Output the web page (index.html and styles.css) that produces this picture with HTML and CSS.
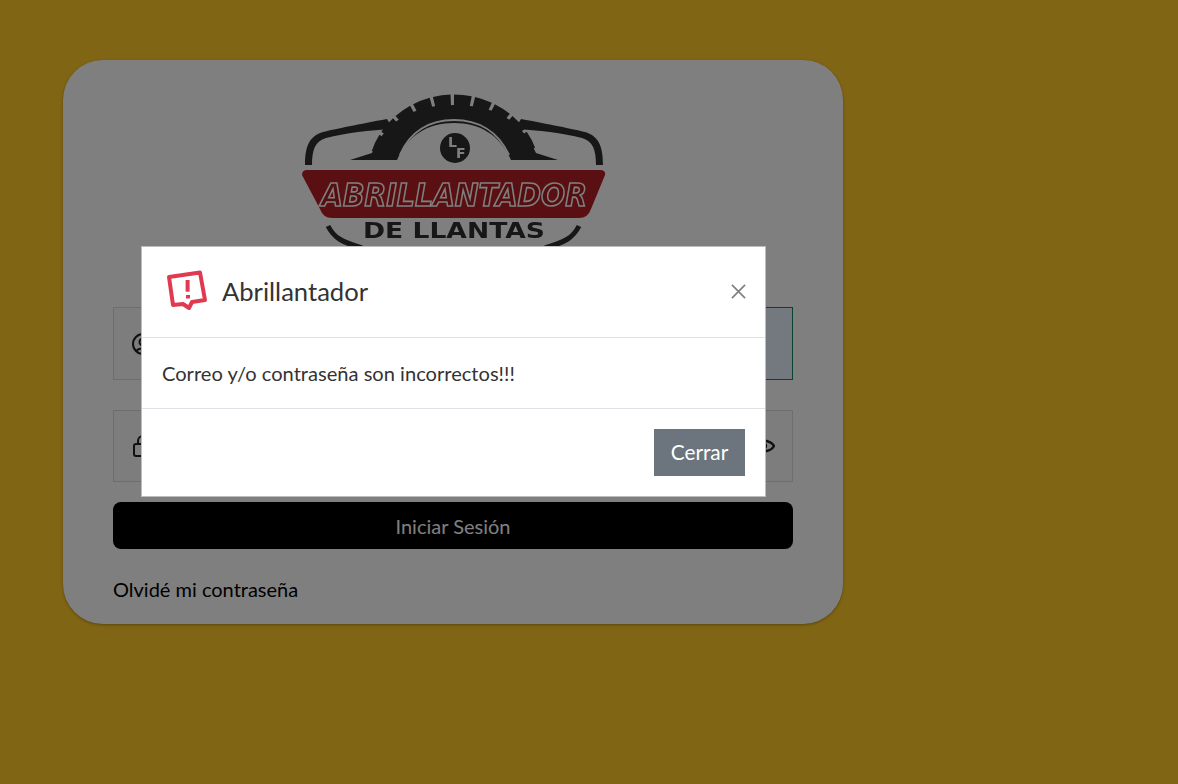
FILE: index.html
```html
<!DOCTYPE html>
<html lang="es">
<head>
<meta charset="utf-8">
<title>Abrillantador</title>
<link rel="stylesheet" href="styles.css">
</head>
<body>
<main class="card">
  <svg class="logo" viewBox="0 0 330 165" width="330" height="165">
    <path class="wing" d="M97 34 C70 39 45 44 33 47 C20 51 15 60 15 80 L22 80 C22 65 25 56 36 53 C55 48 80 45 103 44 Z"/>
    <path class="wing" d="M231 34 C258 39 283 44 295 47 C308 51 313 60 313 80 L306 80 C306 65 303 56 292 53 C273 48 248 45 225 44 Z"/>
    <path class="solid" d="M60 75 L82 68 C98 32 128 20 164 20 C200 20 230 32 246 68 L268 75 L221 75 C210 50 190 38 164 38 C138 38 118 50 107 75 Z"/>
    <path class="tread" d="M88 68 C96 42 125 16 164 16 C203 16 232 42 240 68" pathLength="100"/>
    <path class="hub-arc" d="M110 70 C120 46 140 35 164 35 C188 35 208 46 219 70"/>
    <circle class="solid" cx="165" cy="63" r="15"/>
    <text class="lf" x="158" y="62">L</text>
    <text class="lf" x="166" y="73">F</text>
    <path class="banner" d="M12 90 Q12 85 17 85 L310 85 Q316 85 315 90 L301 124 Q298 133 289 133 L42 133 Q33 133 30 124 Z"/>
    <text class="brand" transform="translate(31 121) scale(1 1.3)" textLength="266" lengthAdjust="spacingAndGlyphs">ABRILLANTADOR</text>
    <text class="sub" x="73" y="153" textLength="182" lengthAdjust="spacingAndGlyphs">DE LLANTAS</text>
    <path class="arc" d="M38 141 C44 153 52 157 72 163"/>
    <path class="arc" d="M289 141 C283 153 275 157 255 163"/>
  </svg>

  <div class="field field-email">
    <span class="addon">
      <svg class="ico" viewBox="0 0 24 24" width="24" height="24"><circle cx="12" cy="12" r="10"/><circle cx="12" cy="10" r="3.5"/><path d="M5.5 19 C7 15.5 17 15.5 18.5 19"/></svg>
    </span>
    <span class="value"></span>
  </div>

  <div class="field">
    <span class="addon">
      <svg class="ico" viewBox="0 0 24 24" width="24" height="24"><rect x="3" y="10" width="18" height="12" rx="2"/><path d="M7 10 V7 a5 5 0 0 1 10 0 V10"/></svg>
    </span>
    <span class="value"></span>
    <span class="addon-eye">
      <svg class="ico ico-eye" viewBox="0 0 24 24" width="24" height="24"><path d="M1 12 C5 5 19 5 23 12 C19 19 5 19 1 12 Z"/><circle cx="12" cy="12" r="3"/></svg>
    </span>
  </div>

  <button class="login">Iniciar Sesión</button>
  <a class="forgot">Olvidé mi contraseña</a>
</main>

<div class="backdrop">
  <section class="dialog">
    <header class="dialog-head">
      <svg class="alert" viewBox="0 0 44 44" width="44" height="44">
        <path d="M5 7 L36 2.5 L41 30 L28 32 L25 38 L19 34 L9 35 Z"/>
        <path d="M23.6 10 L23.6 21.7"/>
        <path d="M24 25 L24 28.5"/>
      </svg>
      <h1 class="dialog-title">Abrillantador</h1>
      <svg class="close" viewBox="0 0 16 16" width="15" height="15"><path d="M1 1 L15 15 M15 1 L1 15"/></svg>
    </header>
    <div class="dialog-body">Correo y/o contraseña son incorrectos!!!</div>
    <footer class="dialog-foot"><button class="dismiss">Cerrar</button></footer>
  </section>
</div>
</body>
</html>
```

FILE: styles.css
```css
* { box-sizing: border-box; }

html, body { height: 100%; }

body {
  margin: 0;
  padding: 60px 0 0 63px;
  background: #ffca28;
  font-family: Lato, "Noto Sans", sans-serif;
  overflow: hidden;
}

.card {
  width: 780px;
  height: 564px;
  padding: 25px 50px 0;
  background: #fff;
  border-radius: 40px;
  box-shadow: 0 1px 3px rgba(0, 0, 0, 0.3);
}

.logo {
  display: block;
  margin: 0 0 57px 177px;
  filter: blur(0.4px);
}

.wing, .solid { fill: #2e2e2e; }
.tread { fill: none; stroke: #2e2e2e; stroke-width: 13; stroke-dasharray: 8.4 1.6; }
.hub-arc { fill: none; stroke: #fff; stroke-width: 2; }
.lf { fill: #fff; font: 700 14px "DejaVu Sans", sans-serif; }
.banner { fill: #b42024; }
.brand {
  fill: #a81c20;
  stroke: #fff;
  stroke-width: 1.3;
  font: italic 700 25px "DejaVu Sans", sans-serif;
}
.sub { fill: #2e2e2e; font: 700 21px "DejaVu Sans", sans-serif; }
.arc { fill: none; stroke: #2e2e2e; stroke-width: 5; }

.field {
  display: flex;
  height: 72px;
  margin-bottom: 20px;
  background: #fafafa;
  border: 1px solid #ddd;
}

.field-email {
  height: 73px;
  margin-bottom: 30px;
  border: 0;
}

.field-email .addon { border: 1px solid #ddd; border-right: 0; }
.field-email .value { background: #e8f0fe; border: 1px solid #198754; }

.addon {
  display: flex;
  align-items: center;
  padding-left: 17px;
  width: 60px;
}

.value { flex: 1; }

.addon-eye { display: flex; align-items: center; padding-right: 17px; }

.ico { fill: none; stroke: #222; stroke-width: 2; }
.ico-eye { stroke-width: 2.4; }

.login {
  display: block;
  width: 100%;
  height: 47px;
  padding: 0;
  border: 0;
  border-radius: 8px;
  background: #000;
  color: #fff;
  font: 400 20px Lato, sans-serif;
}

.forgot {
  display: block;
  margin-top: 28px;
  color: #000;
  font-size: 20px;
  line-height: 24px;
}

.backdrop {
  position: fixed;
  inset: 0;
  background: rgba(0, 0, 0, 0.5);
}

.dialog {
  width: 625px;
  margin: 246px 0 0 141px;
  background: #fff;
  border: 1px solid #bdbdbd;
  color: #333;
}

.dialog-head {
  display: flex;
  align-items: center;
  height: 91px;
  padding: 0 19px 0 22px;
  border-bottom: 1px solid #dee2e6;
}

.alert { flex: none; fill: none; stroke: #e03a50; stroke-width: 4; stroke-linejoin: round; }

.dialog-title {
  flex: 1;
  margin: 0 0 2px 14px;
  font-size: 25.6px;
  font-weight: 400;
  line-height: 1.2;
}

.close { margin-bottom: 2px; fill: none; stroke: #808080; stroke-width: 1.8; }

.dialog-body {
  display: flex;
  align-items: center;
  height: 71px;
  padding: 0 20px;
  font-size: 20.1px;
  border-bottom: 1px solid #dee2e6;
}

.dialog-foot {
  display: flex;
  justify-content: flex-end;
  padding: 20px;
}

.dismiss {
  width: 91px;
  height: 47px;
  padding: 0 0 2px;
  border: 0;
  background: #6c757d;
  color: #fff;
  font: 400 20.8px Lato, sans-serif;
}
```
